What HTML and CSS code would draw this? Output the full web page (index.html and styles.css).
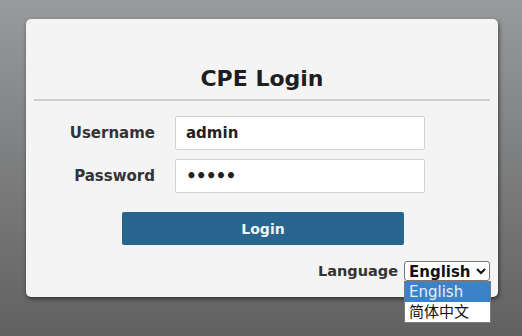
FILE: index.html
```html
<!DOCTYPE html>
<html lang="en">
<head>
    <meta charset="UTF-8">
    <meta name="viewport" content="width=device-width, initial-scale=1.0">
    <title>CPE Login</title>
    <link rel="stylesheet" href="styles.css">
</head>
<body>
    <div class="login-card">
        <h1 class="login-title">CPE Login</h1>

        <form class="login-form">
            <label for="username">Username</label>
            <input type="text" id="username" value="admin">

            <label for="password">Password</label>
            <input type="password" id="password" value="admin">

            <button type="button" class="login-button">Login</button>
        </form>

        <div class="language-row">
            <span class="language-label">Language</span>
            <div class="language-picker">
                <select id="language">
                    <option selected>English</option>
                    <option>简体中文</option>
                </select>
                <ul class="language-list">
                    <li class="active">English</li>
                    <li>简体中文</li>
                </ul>
            </div>
        </div>
    </div>
</body>
</html>
```

FILE: styles.css
```css
body {
    margin: 0;
    min-height: 336px;
    background: linear-gradient(180deg, #999a9b 0%, #7f8081 45%, #616161 100%);
    font-family: 'DejaVu Sans', Verdana, sans-serif;
    overflow: hidden;
}

.login-card {
    width: 472px;
    margin: 19px 0 0 26px;
    padding-bottom: 16px;
    background: #f4f4f4;
    border-radius: 5px;
    box-shadow: 1px 2px 4px rgba(0, 0, 0, 0.55);
}

.login-title {
    margin: 0 8px;
    padding: 46px 0 6px;
    font-size: 22px;
    line-height: 28px;
    text-align: center;
    color: #1e1e1e;
    border-bottom: 2px solid #cfcfcf;
}

.login-form {
    display: grid;
    grid-template-columns: 129px 250px;
    column-gap: 20px;
    row-gap: 9px;
    align-items: center;
    margin-top: 15px;
}

.login-form label {
    text-align: right;
    font-size: 15px;
    font-weight: bold;
    color: #333;
}

.login-form input {
    box-sizing: border-box;
    height: 34px;
    padding: 0 10px;
    border: 1px solid #d2d2d2;
    border-radius: 2px;
    background: #fff;
    font-family: inherit;
    font-size: 15px;
    font-weight: bold;
    color: #222;
}

.login-form input[type="password"] {
    font-size: 17px;
    letter-spacing: -1px;
}

.login-button {
    grid-column: 1 / 3;
    justify-self: start;
    width: 282px;
    height: 33px;
    margin: 10px 0 0 96px;
    border: none;
    border-radius: 2px;
    background: #28658f;
    color: #eef3f7;
    font-family: inherit;
    font-size: 14px;
    font-weight: bold;
}

.language-row {
    display: flex;
    justify-content: flex-end;
    align-items: center;
    gap: 6px;
    margin: 16px 8px 0 0;
}

.language-label {
    font-size: 14.5px;
    font-weight: bold;
    color: #333;
}

.language-picker {
    position: relative;
}

.language-picker select {
    display: block;
    width: 86px;
    height: 20px;
    padding: 0;
    font-family: inherit;
    font-size: 15px;
    font-weight: bold;
    color: #111;
    background: #fff;
    border: 1px solid #767676;
    border-radius: 3px;
}

.language-list {
    position: absolute;
    top: 20px;
    left: 0;
    width: 85px;
    margin: 0;
    padding: 0;
    list-style: none;
    background: #fff;
    border: 1px solid #7a7a7a;
    font-family: 'DejaVu Sans', 'Noto Sans CJK SC', sans-serif;
    font-size: 15px;
    color: #111;
}

.language-list li {
    height: 20px;
    line-height: 20px;
    padding-left: 4px;
}

.language-list li.active {
    background: #3b82c9;
    color: #e6f0fb;
}
```
